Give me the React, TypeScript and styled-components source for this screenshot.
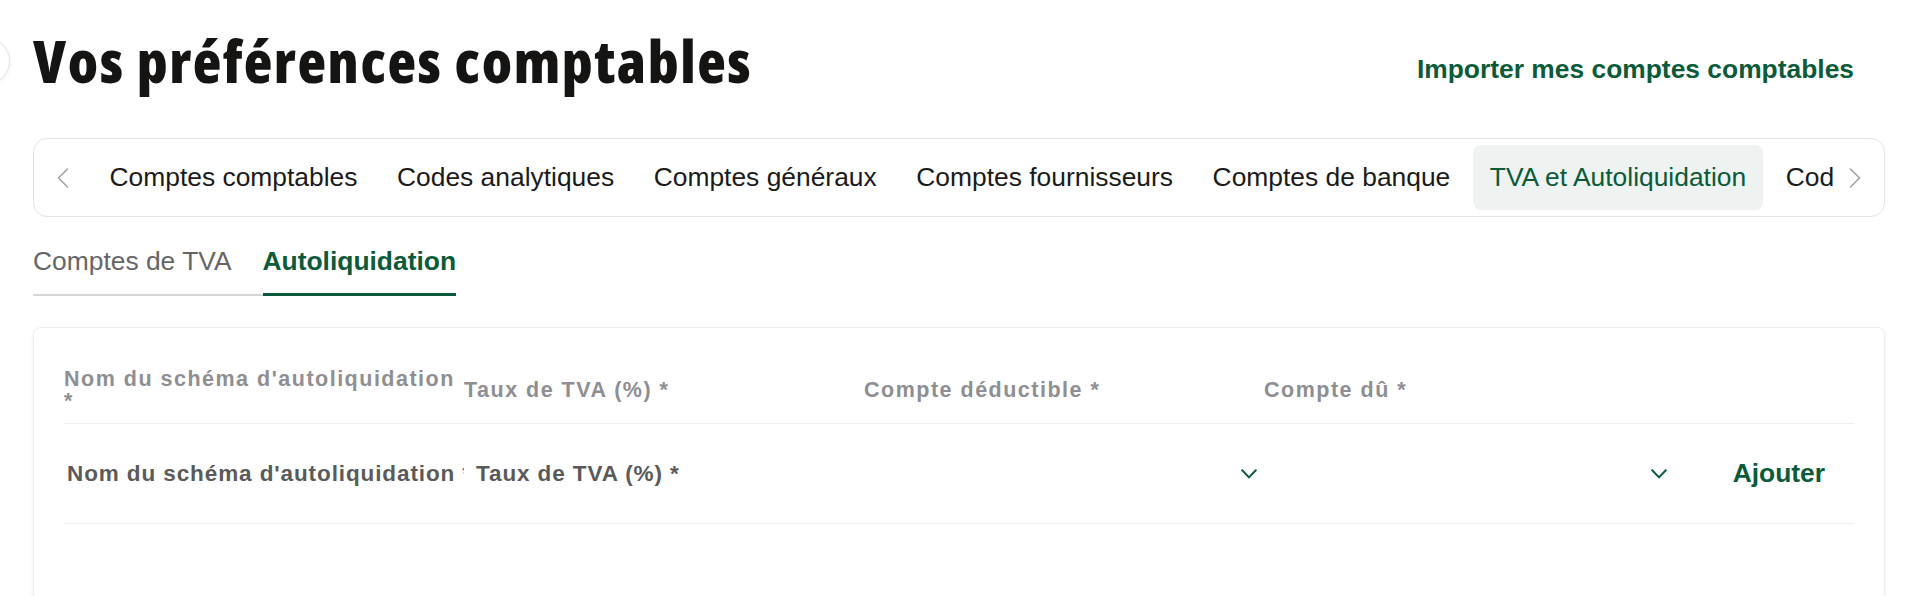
import React from "react";
import styled, { createGlobalStyle } from "styled-components";

const GREEN = "#0b5a3a";

const Global = createGlobalStyle`
  html, body { margin: 0; padding: 0; background: #ffffff; }
  body {
    font-family: "Liberation Sans", Arial, Helvetica, sans-serif;
    color: #1a1a1a;
    -webkit-font-smoothing: antialiased;
  }
  * { box-sizing: border-box; }
`;

const Page = styled.div`
  position: relative;
  padding: 0 35px 0 33px;
`;

const BackCircle = styled.div`
  position: absolute;
  left: -36px;
  top: 38px;
  width: 46px;
  height: 46px;
  border-radius: 50%;
  border: 1px solid #e4e4e4;
  background: #fff;
  box-shadow: 0 1px 4px rgba(0, 0, 0, 0.08);
`;

const Header = styled.header`
  display: flex;
  justify-content: space-between;
  align-items: flex-end;
  padding-top: 24px;
`;

const Title = styled.h1`
  margin: 0;
  font-family: "Open Sans", "Liberation Sans", sans-serif;
  font-stretch: 75%;
  font-size: 59px;
  line-height: 72px;
  font-weight: 800;
  letter-spacing: 1.6px;
  color: #161413;
`;

const LinkButton = styled.a`
  display: block;
  padding: 0 31px 12px 0;
  font-size: 26.4px;
  line-height: 30px;
  font-weight: 700;
  color: ${GREEN};
  text-decoration: none;
  cursor: pointer;
`;

const TabBar = styled.nav`
  margin-top: 42px;
  display: flex;
  align-items: center;
  height: 79px;
  padding: 6px 8px;
  border: 1.65px solid #e6e3dd;
  border-radius: 14px;
  background: #fff;
`;

const ArrowButton = styled.button`
  flex: none;
  width: 42px;
  height: 42px;
  display: flex;
  align-items: center;
  justify-content: center;
  border: none;
  background: transparent;
  padding: 0;
  cursor: pointer;
`;

const ScrollArea = styled.div`
  flex: 1;
  min-width: 0;
  overflow: hidden;
  align-self: stretch;
`;

const TabList = styled.div`
  display: flex;
  gap: 6.6px;
  height: 100%;
  padding-left: 9px;
`;

const TabItem = styled.div<{ $active?: boolean }>`
  flex: none;
  display: flex;
  align-items: center;
  padding: 0 16.5px;
  border-radius: 8px;
  font-size: 26.4px;
  white-space: nowrap;
  color: ${(p) => (p.$active ? GREEN : "#1a1a1a")};
  background: ${(p) => (p.$active ? "#eef3f1" : "transparent")};
`;

const SubTabs = styled.div`
  margin-top: 29px;
  display: flex;
  align-items: flex-end;
`;

const SubTab = styled.div<{ $active?: boolean }>`
  font-size: 26.4px;
  line-height: 30px;
  padding-bottom: ${(p) => (p.$active ? "17px" : "18px")};
  padding-right: ${(p) => (p.$active ? "0" : "31px")};
  font-weight: ${(p) => (p.$active ? 700 : 400)};
  color: ${(p) => (p.$active ? GREEN : "#666666")};
  border-bottom: ${(p) => (p.$active ? `3px solid ${GREEN}` : "2px solid #d6d6d6")};
`;

const Card = styled.section`
  margin-top: 31px;
  min-height: 320px;
  padding: 28px 30px 0 30px;
  border: 1px solid #efefef;
  border-radius: 8px;
  box-shadow: 0 1px 4px rgba(0, 0, 0, 0.06);
  background: #fff;
`;

const Row = styled.div<{ $height: number }>`
  display: grid;
  grid-template-columns: 400px 400px 400px 410px 1fr;
  align-items: center;
  min-height: ${(p) => p.$height}px;
  border-bottom: 1.65px solid #eef0ef;
`;

const HeadCell = styled.div`
  padding-right: 4px;
  font-size: 21.5px;
  line-height: 22px;
  font-weight: 700;
  letter-spacing: 1.5px;
  color: #8e8e93;
`;

const InputCell = styled.div<{ $indent: number }>`
  overflow: hidden;
  white-space: nowrap;
  padding-left: ${(p) => p.$indent}px;
  font-size: 22.5px;
  font-weight: 700;
  letter-spacing: 0.9px;
  color: #5a5a5a;
`;

const SelectCell = styled.div`
  display: flex;
  justify-content: flex-end;
  align-items: center;
  padding-right: 7px;
  height: 40px;
`;

const AddButton = styled.button`
  justify-self: end;
  margin-right: 29px;
  border: none;
  background: transparent;
  padding: 0;
  font-family: inherit;
  font-size: 26.4px;
  font-weight: 700;
  color: ${GREEN};
  cursor: pointer;
`;

const ChevronSide = ({ dir }: { dir: "left" | "right" }) => (
  <svg width="12" height="20" viewBox="0 0 12 20" fill="none">
    <polyline
      points={dir === "left" ? "10.5,1 1.5,10 10.5,19" : "1.5,1 10.5,10 1.5,19"}
      stroke="#a3a3a3"
      strokeWidth="1.6"
      strokeLinecap="round"
      strokeLinejoin="round"
    />
  </svg>
);

const ChevronDown = () => (
  <svg width="16" height="10" viewBox="0 0 16 10" fill="none">
    <polyline
      points="1.2,1.2 8,8.4 14.8,1.2"
      stroke={GREEN}
      strokeWidth="2"
      strokeLinecap="round"
      strokeLinejoin="round"
    />
  </svg>
);

const tabs = [
  "Comptes comptables",
  "Codes analytiques",
  "Comptes généraux",
  "Comptes fournisseurs",
  "Comptes de banque",
  "TVA et Autoliquidation",
  "Codes journaux",
];

export default function App() {
  return (
    <>
      <Global />
      <Page>
        <BackCircle />
        <Header>
          <Title>Vos préférences comptables</Title>
          <LinkButton>Importer mes comptes comptables</LinkButton>
        </Header>

        <TabBar>
          <ArrowButton aria-label="précédent">
            <ChevronSide dir="left" />
          </ArrowButton>
          <ScrollArea>
            <TabList>
              {tabs.map((t) => (
                <TabItem key={t} $active={t === "TVA et Autoliquidation"}>
                  {t}
                </TabItem>
              ))}
            </TabList>
          </ScrollArea>
          <ArrowButton aria-label="suivant">
            <ChevronSide dir="right" />
          </ArrowButton>
        </TabBar>

        <SubTabs>
          <SubTab>Comptes de TVA</SubTab>
          <SubTab $active>Autoliquidation</SubTab>
        </SubTabs>

        <Card>
          <Row $height={68}>
            <HeadCell>Nom du schéma d'autoliquidation *</HeadCell>
            <HeadCell>Taux de TVA (%) *</HeadCell>
            <HeadCell>Compte déductible *</HeadCell>
            <HeadCell>Compte dû *</HeadCell>
            <div />
          </Row>
          <Row $height={100}>
            <InputCell $indent={3}>Nom du schéma d'autoliquidation *</InputCell>
            <InputCell $indent={12}>Taux de TVA (%) *</InputCell>
            <SelectCell>
              <ChevronDown />
            </SelectCell>
            <SelectCell>
              <ChevronDown />
            </SelectCell>
            <AddButton>Ajouter</AddButton>
          </Row>
        </Card>
      </Page>
    </>
  );
}
